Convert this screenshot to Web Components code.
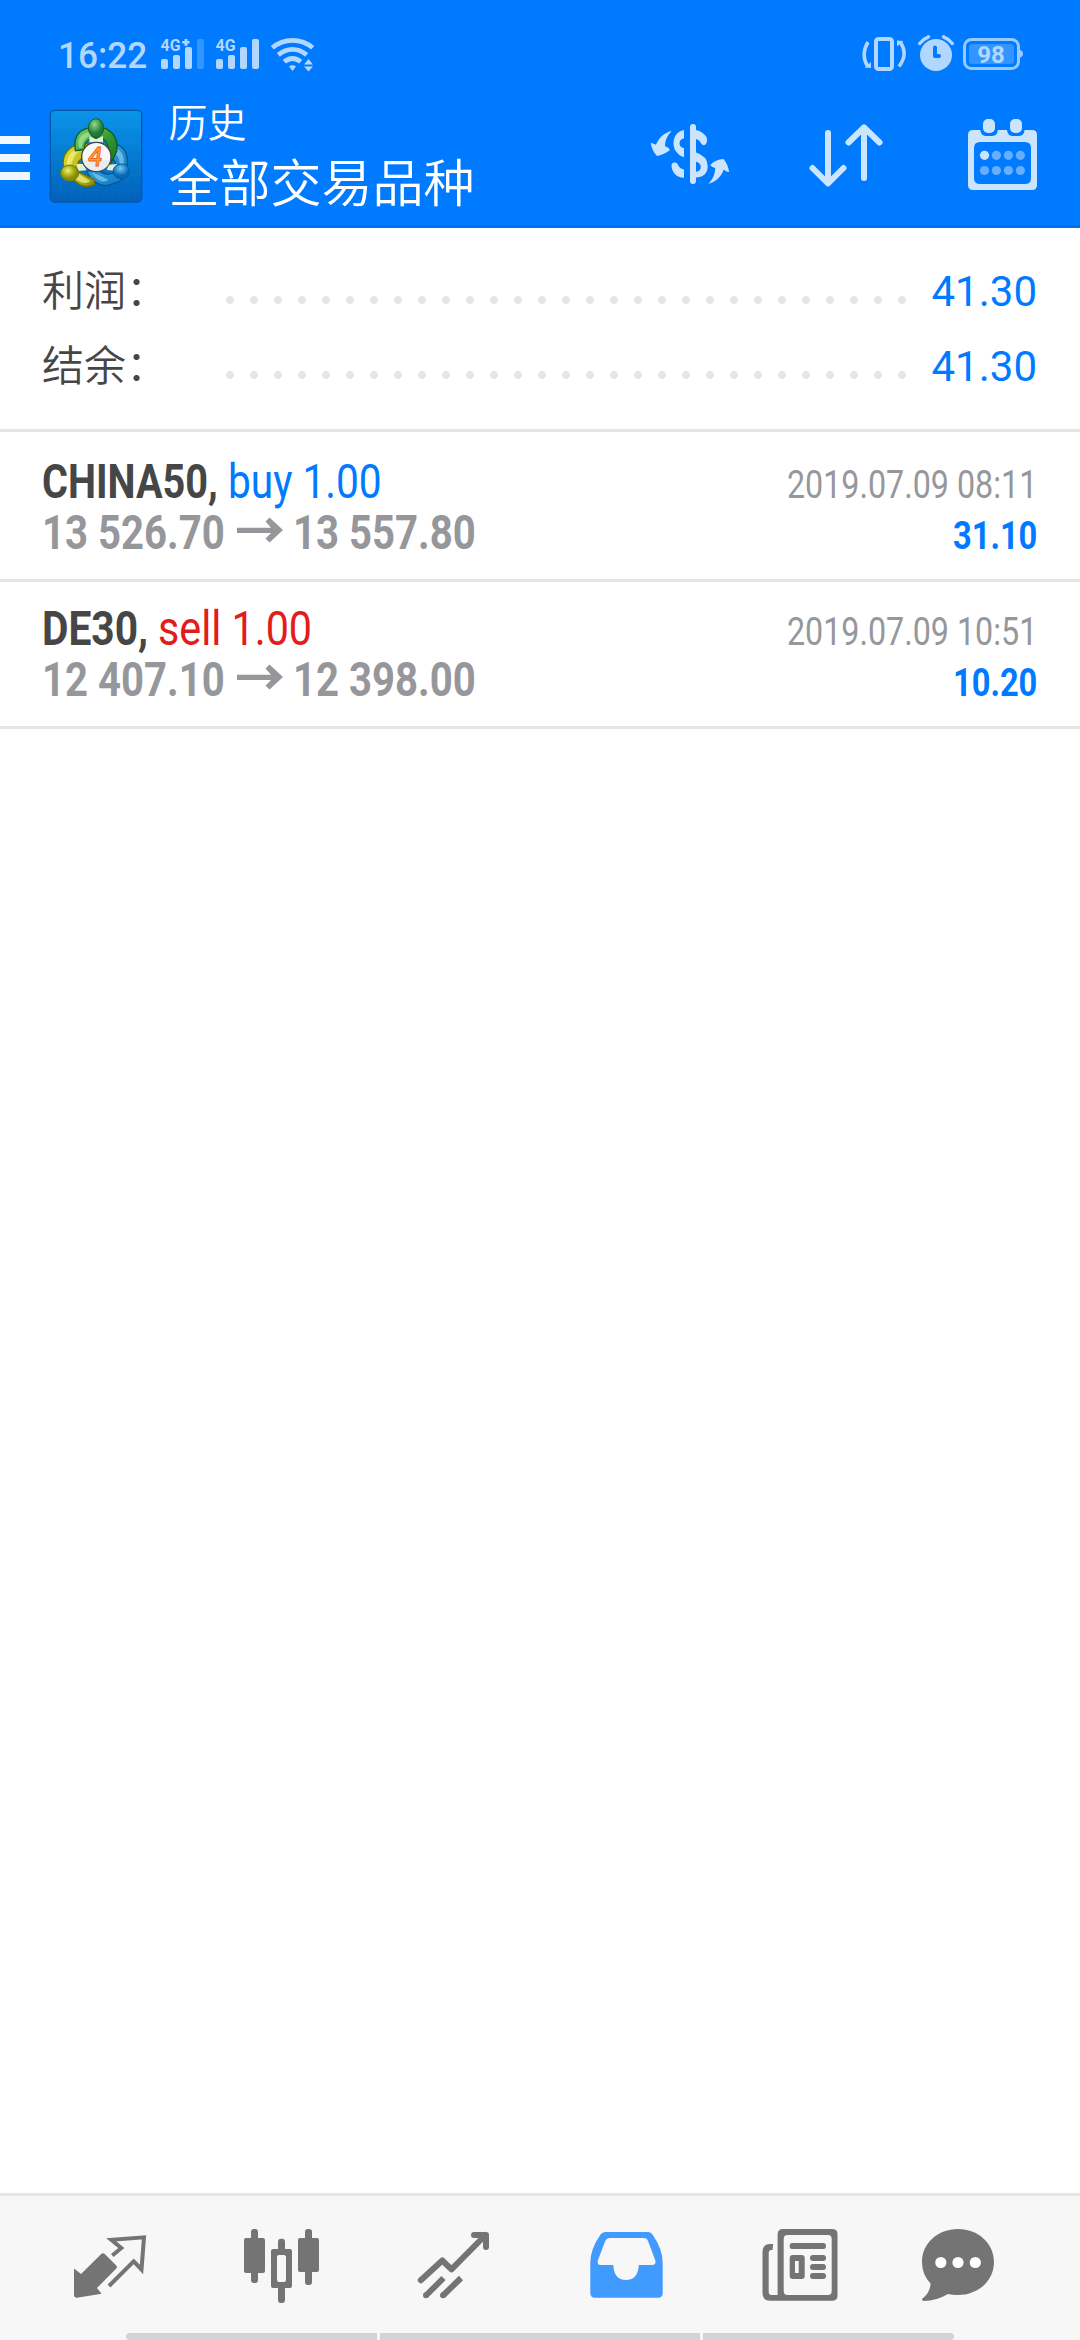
<!DOCTYPE html>
<html lang="zh-CN">
<head>
<meta charset="utf-8">
<title>历史</title>
<style>
html,body{margin:0;padding:0;background:#fff}
body{font-family:Roboto,"Noto Sans CJK SC",sans-serif}
</style>
</head>
<body>
<history-app></history-app>
<script>
const define = (name, html, setup) => customElements.define(name, class extends HTMLElement {
  constructor() {
    super();
    const t = document.createElement('template');
    t.innerHTML = html;
    this.attachShadow({ mode: 'open' }).append(t.content.cloneNode(true));
  }
  connectedCallback() { if (setup) setup.call(this, this.shadowRoot); }
});

/* A single line of text condensed to a given advance width. */
define('fit-text', `
<style>
:host{display:inline-block;white-space:nowrap;flex:none}
span{display:inline-block;transform-origin:0 50%;white-space:nowrap}
</style><span><slot></slot></span>`, function (root) {
  const w = +this.getAttribute('w'), s = root.querySelector('span');
  this.style.width = w + 'px';
  s.style.transform = 'scaleX(' + w / s.offsetWidth + ')';
});

define('status-bar', `
<style>
:host{display:flex;height:99px;color:#b2d7ff}
.time{font-size:36px;font-weight:500;line-height:42px;padding:35px 0 0 58px;width:95px}
svg{display:block;flex:none}
.gap{flex:1}
text{font-family:Roboto,sans-serif;font-weight:700}
</style>
<div class="time"><fit-text w="89">16:22</fit-text></div>
<svg width="167" height="99" viewBox="153 0 167 99" fill="#b2d7ff">
  <text x="160.500" y="51.300" font-size="17" textLength="20" lengthAdjust="spacingAndGlyphs">4G</text>
  <path d="M184.500 39h3v2h2v2.600h-2v2.200h-3v-2.200h-2.300v-2.600h2.300z"/>
  <rect x="161" y="59" width="7" height="10" rx="2"/><rect x="173" y="55" width="7" height="14" rx="2"/>
  <rect x="185" y="47" width="7" height="22" rx="2"/><rect x="197" y="39" width="7" height="30" rx="2" fill="#3395ff"/>
  <text x="215.500" y="51.300" font-size="17" textLength="20" lengthAdjust="spacingAndGlyphs">4G</text>
  <rect x="216" y="59" width="7" height="10" rx="2"/><rect x="228" y="55" width="7" height="14" rx="2"/>
  <rect x="240" y="47" width="7" height="22" rx="2"/><rect x="252" y="39" width="7" height="30" rx="2"/>
  <g fill="none" stroke="#b2d7ff" stroke-width="4.800">
    <path d="M272.300 47.800Q281 40.300 292.500 40.300T312.700 47.800"/>
    <path d="M278.300 54.800Q285 49.300 292.500 49.300T306.700 54.800"/>
    <path d="M284.300 61.800Q288 58.500 292.500 58.500T300.700 61.800"/>
  </g>
  <path d="M289 66.500Q292.500 64 296 66.500L292.500 71zM304 64.500l4.500-5.500 4.500 5.500zM304 66.500h9l-4.500 5z"/>
</svg>
<div class="gap"></div>
<svg width="220" height="99" viewBox="860 0 220 99" fill="none" stroke="#b2d7ff">
  <rect x="876" y="39" width="16" height="30" rx="2.500" stroke-width="4"/>
  <path d="M868 42Q860.500 54.500 867.500 66M899 66.500Q908.500 54 900.500 42.500" stroke-width="3.500"/>
  <path d="M871 62v6l-6.500-.5zM897 40.500l6.500.5-6.500 5.500z" fill="#b2d7ff" stroke="none"/>
  <circle cx="936" cy="55" r="16" fill="#b2d7ff" stroke="none"/>
  <path d="M919.700 43.500Q923 39 928.500 36.800M943.500 36.800Q949 39 952.300 43.500" stroke-width="3.400" stroke-linecap="round"/>
  <path d="M935 47.500V56h4" stroke="#007aff" stroke-width="4" stroke-linecap="round" stroke-linejoin="round"/>
  <rect x="964.500" y="39.500" width="54" height="29" rx="7" stroke="#99caff" stroke-width="3"/>
  <path d="M1020 50q3 1 3 3.800t-3 3.800z" fill="#99caff" stroke="none"/>
  <rect x="969" y="44" width="45" height="20" rx="3" fill="#3395ff" stroke="none"/>
  <text x="977.300" y="63" font-size="24" fill="#b2d7ff" stroke="none" textLength="27.500" lengthAdjust="spacingAndGlyphs">98</text>
</svg>`);

define('broker-logo', `
<style>:host{display:block;width:94px;height:94px}svg{display:block}</style>
<svg width="94" height="94" viewBox="26 26 282 282">
  <defs>
    <linearGradient id="bg" x2="0" y2="1"><stop stop-color="#0a94ea"/><stop offset=".5" stop-color="#047bd2"/><stop offset="1" stop-color="#0260b8"/></linearGradient>
    <linearGradient id="g" x2="1" y2="1"><stop stop-color="#7bd36e"/><stop offset=".5" stop-color="#359c35"/><stop offset="1" stop-color="#16691b"/></linearGradient>
    <linearGradient id="y" x2="1" y2="1"><stop stop-color="#e7df38"/><stop offset=".5" stop-color="#c0bd1c"/><stop offset="1" stop-color="#898b09"/></linearGradient>
    <linearGradient id="b" x2="1" y2="1"><stop stop-color="#48b6ee"/><stop offset="1" stop-color="#0873bd"/></linearGradient>
    <radialGradient id="gh" cx=".4" cy=".3"><stop stop-color="#8fdb8d"/><stop offset="1" stop-color="#207b35"/></radialGradient>
    <radialGradient id="yh" cx=".4" cy=".35"><stop stop-color="#eff08b"/><stop offset=".5" stop-color="#b9bf23"/><stop offset="1" stop-color="#858c08"/></radialGradient>
    <radialGradient id="bh" cx=".45" cy=".3"><stop stop-color="#6dcbf4"/><stop offset="1" stop-color="#0668b8"/></radialGradient>
  </defs>
  <rect x="30" y="30" width="274" height="275" rx="12" fill="url(#bg)" stroke="#0757a5" stroke-width="4"/>
  <path d="M34 78H300M34 126H300M34 174H300M34 222H300M34 270H300M71 34V301M119 34V301M167 34V301M215 34V301M263 34V301" stroke="#43b4f5" stroke-width="1.500" opacity=".18"/>
  <path d="M221 130C249 136 264 158 261 190L261 222 235 245 200 256Q158 255 139 212L174 210Q203 230 223 215Q236 185 208 169Z" fill="url(#b)" stroke="#075796" stroke-width="4"/>
  <path d="M229 144Q252 158 251 188L239 194Q238 164 216 156ZM154 216Q183 227 205 239Q184 251 164 229Z" fill="#a6ddf5" opacity=".55"/>
  <path d="M143 130C87 126 60 164 71 205L88 228 106 244Q132 268 163 252L161 237 116 216Q101 187 128 173Z" fill="url(#y)" stroke="#67720a" stroke-width="4"/>
  <path d="M127 138Q80 150 78 197L92 204Q94 161 126 147ZM104 234Q129 257 151 243L117 222Z" fill="#f2f18a" opacity=".75"/>
  <path d="M105 151Q97 96 140 84L196 84Q237 106 229 153L207 199Q189 184 204 151Q204 126 185 113L154 113Q129 125 133 148Z" fill="url(#g)" stroke="#155d25" stroke-width="4"/>
  <path d="M116 142Q107 105 145 94L153 103Q125 116 125 143Z" fill="#b2e99c" opacity=".65"/>
  <path d="M147 107L167 117 188 107 188 126 147 126ZM108 190L128 191 139 210 113 212ZM205 193L230 191 223 211 199 209Z" fill="#e5f0ce"/>
  <ellipse cx="167" cy="83" rx="23" ry="28" fill="url(#gh)" stroke="#175d27" stroke-width="3"/>
  <ellipse cx="88" cy="218" rx="27" ry="24" fill="url(#yh)" stroke="#727a0b" stroke-width="3"/>
  <ellipse cx="243" cy="213" rx="25" ry="22" fill="url(#bh)" stroke="#075d9e" stroke-width="3"/>
  <circle cx="168" cy="170" r="44" fill="#f7f7f8" stroke="#3f4a41" stroke-width="4"/>
  <path d="M126 180H210Q205 211 168 212Q135 211 126 180Z" fill="#dfe1e7" opacity=".5"/>
  <text x="143" y="197" font-family="Lato" font-size="78" font-weight="700" font-style="italic" fill="#ffa02b" stroke="#ee5e22" stroke-width="2.500" textLength="44" lengthAdjust="spacingAndGlyphs">4</text>
</svg>`);

define('title-bar', `
<style>
:host{display:flex;height:126px;border-bottom:3px solid #0071eb;color:#fff;font-family:"Noto Sans CJK SC",sans-serif;box-sizing:border-box;height:129px}
.menu{display:flex;flex-direction:column;gap:10px;padding-top:37px;width:48.700px}
.menu i{display:block;width:30px;height:8px;background:#f0f7ff}
broker-logo{margin-top:9.700px}
.titles{margin-left:25.800px;flex:1;font-weight:350}
.sub{font-size:39px;line-height:46px;margin-top:-2px}
.main{font-size:51px;line-height:60px;margin-top:7px}
svg{display:block;flex:none}
</style>
<div class="menu"><i></i><i></i><i></i></div>
<broker-logo></broker-logo>
<div class="titles"><div class="sub">历史</div><div class="main">全部交易品种</div></div>
<svg width="440" height="126" viewBox="640 99 440 126" fill="#cce5ff">
  <rect x="690" y="124" width="6" height="60" rx="3"/>
  <path d="M684 130C676 131.500 673.500 138 673.500 143.500S677 155 684 157.200V148.300Q679.500 147 679.500 143.200T684 138.200z"/>
  <path d="M671.500 166Q671.500 163 674.300 162.600T678 165Q679.500 168.500 684 169.500V177.800C676.500 177.500 672 172.500 671.500 166z"/>
  <path d="M696 130Q704.500 132 707 138.500Q707.500 145 703.500 145.200Q701.500 145 700.300 142Q698.800 139.500 696 139z"/>
  <path fill-rule="evenodd" d="M695 152Q707.700 156 707.700 166Q707.700 177 695 177.700zM696 161.700V171.700Q700.800 171 700.800 167T696 161.700z"/>
  <path d="M671.800 131C667 135.500 665.300 140.500 665 146.200Q668.500 147 670 150Q664.500 154.500 657 156Q651.500 150 650.800 142.700Q653.500 143.500 656 144.700C658.500 138.500 664 132.500 671.800 131z"/>
  <path d="M708.200 183.800C713 179.500 715 174 715.200 168Q712 167.500 710.200 165Q715.500 159.500 723.500 159Q728 164.500 729.200 172Q726.500 172 723.800 169.500C721.500 176 716 182 708.200 183.800z"/>
  <g fill="none" stroke="#cce5ff" stroke-width="6" stroke-linecap="round" stroke-linejoin="round">
    <path d="M828 133V183M812.500 168L828 183.500 843.500 168"/>
    <path d="M864 178V128M848.500 142.500L864 127.300 879.500 142.500"/>
  </g>
  <path fill-rule="evenodd" d="M973 130h7.300v.5q1 5.500 6 5.500h5q6 0 6.500-5.500v-.5h9.200v.5q1 5.500 6 5.500h5q6 0 6.500-5.500v-.5h7.500q5 0 5 5V185q0 5-5 5H973q-5 0-5-5V135q0-5 5-5zM980 142q-6 0-6 6V178q0 6 6 6H1025q6 0 6-6V148q0-6-6-6z"/>
  <rect x="983" y="119" width="12" height="14" rx="5"/><rect x="1010" y="119" width="12" height="14" rx="5"/>
  <circle cx="984.500" cy="155.300" r="4.600"/>
  <g fill="#66afff"><circle cx="996.400" cy="155.300" r="4.600"/><circle cx="1008.400" cy="155.300" r="4.600"/><circle cx="1020.400" cy="155.300" r="4.600"/>
  <circle cx="984.500" cy="170.500" r="4.600"/><circle cx="996.400" cy="170.500" r="4.600"/><circle cx="1008.400" cy="170.500" r="4.600"/><circle cx="1020.400" cy="170.500" r="4.600"/></g>
</svg>`);

define('summary-line', `
<style>
:host{display:flex;align-items:center;height:75px;padding:0 43px 0 42px;color:#464646;font-size:42px}
.label{width:176px;font-family:"Noto Sans CJK SC",sans-serif;font-weight:350;line-height:60px;white-space:nowrap;margin-bottom:4px}
.dots{width:696px;height:24px;margin-top:20px;background:radial-gradient(circle at center,#e5e5e5 3.600px,transparent 4.200px) 0 0/24px 24px repeat-x}
.value{margin-left:auto;color:#007aff;line-height:50px;margin-top:4px}
</style>
<div class="label"><slot></slot></div><div class="dots"></div><div class="value"><slot name="value"></slot></div>`);

define('deal-row', `
<style>
:host{display:block;padding:21px 43px 21px 42px;border-bottom:3px solid #e5e5e5;font-size:48px}
.line{display:flex;align-items:baseline;height:51px;line-height:51px;white-space:nowrap}
.gap{flex:1}
svg{display:block;align-self:flex-start;width:46px;height:51px;margin:0 10px 0 12px;flex:none}
slot[name=symbol]::slotted(*){color:#464646}
slot[name=open]::slotted(*),slot[name=close]::slotted(*){color:#96979b;font-weight:700}
slot[name=date]::slotted(*){color:#96979b;font-size:39px}
slot[name=profit]::slotted(*){color:#007aff;font-size:39px;font-weight:700}
</style>
<div class="line"><slot name="symbol"></slot><span class="gap"></span><slot name="date"></slot></div>
<div class="line"><slot name="open"></slot>
<svg viewBox="0 0 46 51"><path d="M0 20.700H34L28.500 14.500 32.500 10.500 46 23 32.500 35.500 28.500 31.500 34 26H0z" fill="#96979b"/></svg>
<slot name="close"></slot><span class="gap"></span><slot name="profit"></slot></div>`);

define('tab-bar', `
<style>
:host{display:flex;flex-direction:column;height:144px;background:#f7f7f7;border-top:3px solid #e5e5e5}
.tabs{display:flex;height:137px;padding:0 24px}
.tabs svg{display:block;width:172px;height:137px;flex:none}
.edge{display:flex;gap:3px;height:7px;padding-left:126px}
.edge i{display:block;width:251px;background:#d3d3d3}
.edge i:first-child{border-radius:4px 0 0 4px}
.edge i:nth-child(2){width:320px}
.edge i:last-child{border-radius:0 4px 4px 0}
</style>
<div class="tabs">
<svg viewBox="24 2196 172 137" fill="#747474">
  <path d="M74 2268.500L81 2274 101.500 2253.800Q103 2252.500 104.500 2253.800L116.300 2265.500Q117.500 2267 116.300 2268.500L97 2288 101.500 2293.800 77 2297.700Q74 2297.700 74 2295z"/>
  <path d="M112.300 2255.500L121.300 2248 111.300 2239.800 144 2237.300 141.500 2269.500 133.700 2261.300 109 2286" fill="none" stroke="#747474" stroke-width="4"/>
</svg>
<svg viewBox="196 2196 172 137" fill="#747474">
  <rect x="251" y="2229" width="7" height="54" rx="3"/><rect x="244" y="2238" width="21" height="35" rx="2"/>
  <rect x="278" y="2238.700" width="7" height="14" rx="3"/><rect x="278" y="2284" width="7" height="19" rx="3"/>
  <path fill-rule="evenodd" d="M273 2249h17q2 0 2 2v35q0 2-2 2H273q-2 0-2-2V2251q0-2 2-2zM279 2255q-2 0-2 2v23q0 2 2 2h5q2 0 2-2V2257q0-2-2-2z"/>
  <rect x="305" y="2229" width="7" height="56" rx="3"/><rect x="298" y="2238" width="21" height="34" rx="2"/>
</svg>
<svg viewBox="368 2196 172 137" fill="none" stroke="#747474" stroke-width="6" stroke-linejoin="round">
  <path d="M420.800 2280.300L442.300 2260.500 451.500 2269.300 485.500 2235M474 2235H486V2247" stroke-linecap="round"/>
  <path d="M443.500 2278L426 2295.500M461 2278L443 2295.500"/>
  <g fill="#747474" stroke="none"><circle cx="426" cy="2295.300" r="3"/><circle cx="443" cy="2295.300" r="3"/></g>
</svg>
<svg viewBox="540 2196 172 137" fill="#419bff">
  <path fill-rule="evenodd" d="M605 2232H648.500Q651 2232 652.500 2234.500Q662.700 2249 662.700 2263V2293Q662.700 2297.700 658 2297.700H595Q590.300 2297.700 590.300 2293V2263Q590.300 2249 600.500 2234.500Q602.500 2232 605 2232zM610 2238Q606.500 2238 605.300 2241L598 2260Q596.700 2265 600.500 2265H613.300Q614 2280 626 2280T638.800 2265H652Q656.500 2265 655.200 2260L648 2241Q647 2238 643.500 2238z"/>
</svg>
<svg viewBox="712 2196 172 137" fill="#747474">
  <path fill-rule="evenodd" d="M783 2229H832Q837.500 2229 837.500 2234V2296Q837.500 2300.700 832 2300.700H770Q762.500 2300.700 762.500 2293V2252Q762.500 2244 770 2244H773.200L772.500 2250H771Q768.700 2250 768.700 2252.500V2292Q768.700 2295 771.500 2295H777.600V2234.500Q777.600 2229 783 2229zM787.500 2235Q783.700 2235 783.700 2239V2291Q783.700 2295 787.500 2295H828Q831.700 2295 831.700 2291V2239Q831.700 2235 828 2235z"/>
  <rect x="789.700" y="2243" width="36.200" height="6" rx="2.500"/>
  <path fill-rule="evenodd" d="M792.700 2255h9q3 0 3 3v18q0 3-3 3h-9q-3 0-3-3v-18q0-3 3-3zM795 2261V2273H798.700V2261z"/>
  <rect x="810" y="2255" width="16" height="6" rx="3"/><rect x="810" y="2264" width="16" height="6" rx="3"/><rect x="810" y="2273" width="16" height="6" rx="3"/>
</svg>
<svg viewBox="884 2196 172 137">
  <path d="M958 2229C978 2229 994 2243 994 2262S978 2295 958 2295Q952 2295 948 2294Q936 2301 924 2301Q921 2300.500 922.500 2298.500Q930.500 2292 930.500 2283.500Q922 2274.500 922 2262C922 2243 938 2229 958 2229z" fill="#747474"/>
  <g fill="#fff"><circle cx="940.800" cy="2262.500" r="5.600"/><circle cx="958" cy="2262.500" r="5.600"/><circle cx="975.300" cy="2262.500" r="5.600"/></g>
</svg>
</div>
<div class="edge"><i></i><i></i><i></i></div>`);

define('history-app', `
<style>
:host{display:flex;flex-direction:column;width:1080px;height:2340px;background:#fff;overflow:hidden}
header{background:#007aff;height:228px;display:flex;flex-direction:column}
.summary{box-sizing:border-box;height:204px;padding-top:24px;border-bottom:3px solid #e5e5e5}
deal-row:first-of-type{padding-top:24px}
.name{font-weight:700}
.side{margin-left:9.500px}
.buy{color:#007aff}.sell{color:#e21b1b}
main{flex:1}
</style>
<header><status-bar></status-bar><title-bar></title-bar></header>
<section class="summary">
  <summary-line>利润：<span slot="value">41.30</span></summary-line>
  <summary-line>结余：<span slot="value">41.30</span></summary-line>
</section>
<main>
  <deal-row>
    <span slot="symbol"><fit-text class="name" w="176">CHINA50,</fit-text><fit-text class="side buy" w="154">buy 1.00</fit-text></span>
    <fit-text slot="date" w="250.500">2019.07.09 08:11</fit-text>
    <fit-text slot="open" w="183">13 526.70</fit-text><fit-text slot="close" w="183">13 557.80</fit-text>
    <fit-text slot="profit" w="84.500">31.10</fit-text>
  </deal-row>
  <deal-row>
    <span slot="symbol"><fit-text class="name" w="106">DE30,</fit-text><fit-text class="side sell" w="154">sell 1.00</fit-text></span>
    <fit-text slot="date" w="250.500">2019.07.09 10:51</fit-text>
    <fit-text slot="open" w="183">12 407.10</fit-text><fit-text slot="close" w="183">12 398.00</fit-text>
    <fit-text slot="profit" w="84.500">10.20</fit-text>
  </deal-row>
</main>
<tab-bar></tab-bar>`);
</script>
</body>
</html>
